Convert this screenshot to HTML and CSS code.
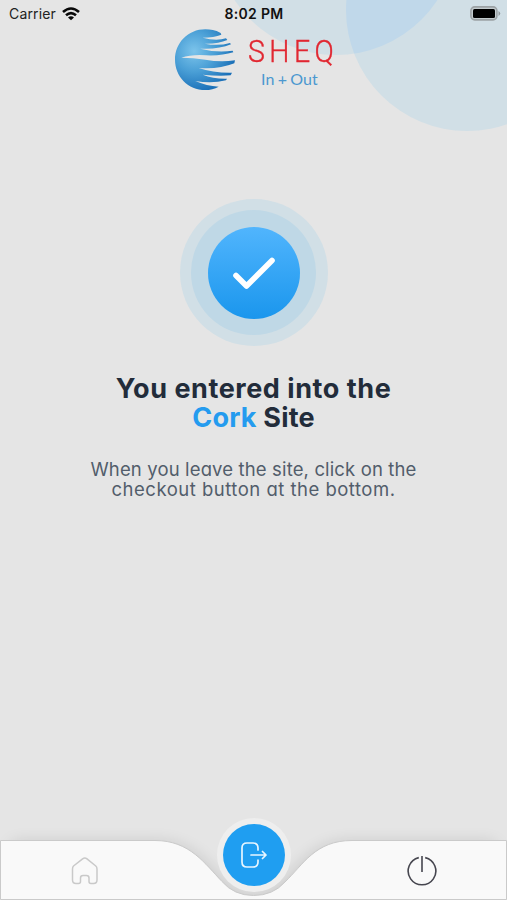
FILE: index.html
```
<!DOCTYPE html>
<html lang="en">
<head>
<meta charset="utf-8">
<meta name="viewport" content="width=device-width, initial-scale=1">
<title>SHEQ In + Out</title>
<link rel="stylesheet" href="styles.css">
</head>
<body>
<div class="screen">
  <svg class="backdrop" viewBox="0 0 507 140" aria-hidden="true">
    <circle cx="336" cy="-66" r="121" fill="#d1dfe6"/>
    <circle cx="467" cy="10" r="121" fill="#d1dfe6"/>
    <clipPath id="overlap"><circle cx="336" cy="-66" r="121"/></clipPath>
    <circle cx="467" cy="10" r="121" fill="#c0d8ea" clip-path="url(#overlap)"/>
  </svg>
  <header class="status">
    <div class="carrier"><span>Carrier</span>
      <svg width="18" height="14" viewBox="0 0 18 14" fill="none" stroke="#080808" stroke-width="2.6"><path d="M1 5Q9-2 17 5M4 8.3Q9 4 14 8.3"/><path d="M9 13.3L6 10.5Q9 8 12 10.5Z" fill="#080808" stroke="none"/></svg>
    </div>
    <time>8:02 PM</time>
    <svg class="battery" width="31" height="15" viewBox="0 0 31 15"><rect x=".9" y=".9" width="26" height="13" rx="3.8" fill="#c3cbce" stroke="#9ca2a5" stroke-width="1.6"/><rect x="3" y="3" width="22" height="9" rx="1.5" fill="#000"/><path d="M28.5 5Q32 7.5 28.5 10Z" fill="#92989b"/></svg>
  </header>
  <div class="brand">
    <svg width="62" height="62" viewBox="12 12 186 186" aria-hidden="true">
      <defs><radialGradient id="globe" cx="32%" cy="36%" r="68%"><stop offset="0" stop-color="#7cc4eb"/><stop offset=".5" stop-color="#4a9fd6"/><stop offset="1" stop-color="#1b70b8"/></radialGradient></defs>
      <path fill="url(#globe)" d="M152 24C135 15 122 13 106 13C54 13 15 54 15 104C15 154 54 195 106 195C120 195 134 192 146 185Q110 183 76 168Q125 177 168 166L171 161Q130 162 98 149Q145 154 182 151L186 143Q130 144 86 129Q145 134 193 115L195 106Q150 112 106 104Q70 98 34 98Q65 88 108 91Q155 93 190 82L188 77Q140 84 90 71Q145 74 183 58L180 54Q145 64 104 56Q145 57 172 45L168 40Q138 49 98 38Q132 38 154 29Z"/>
    </svg>
    <div class="wordmark"><span class="name">SHEQ</span><span class="sub">In + Out</span></div>
  </div>
  <main class="content">
    <div class="halo"><div class="ring"><div class="disc">
      <svg width="92" height="92" viewBox="0 0 92 92" fill="none" stroke="#fff" stroke-width="5.6" stroke-linecap="round" stroke-linejoin="round"><path d="M28 48.500L38.500 59L64 33.500"/></svg>
    </div></div></div>
    <h1><span class="h-one">You entered into the</span><span class="h-two"><b>Cork</b> Site</span></h1>
    <p><span class="p-one">When you leave the site, click on the</span><span class="p-two">checkout button at the bottom.</span></p>
  </main>
  <nav class="tabs">
    <svg class="tab-shape" width="507" height="100" viewBox="0 0 507 100" aria-hidden="true">
      <defs><filter id="soft" x="-10%" y="-50%" width="120%" height="200%"><feGaussianBlur stdDeviation="9"/></filter></defs>
      <path d="M12 44H155C190 44 205 66 222 83Q234 97 253.500 97Q273 97 285 84C303 67 315 44 352 44H495V110H12Z" fill="#000" opacity=".16" filter="url(#soft)"/>
      <path d="M.5 40.500H155C190 40.500 205 64 222 81.500Q234 95.500 253.500 95.500Q273 95.500 285 82C303 65 315 40.500 352 40.500H506.500V99.500H.5Z" fill="#f9f9f9" stroke="#cacaca"/>
    </svg>
    <div class="tab-row">
      <a class="tab home" aria-label="Home"><svg width="28" height="30" viewBox="0 0 28 30" fill="none" stroke="#c9c9c9" stroke-width="1.500" stroke-linejoin="round"><path d="M2.500 10Q1.500 11 1.500 13V24Q1.500 27.500 5 27.500H7.500Q9.500 27.500 9.500 25.500V22Q9.500 19.500 12 19.500H15.500Q18 19.500 18 22V25.500Q18 27.500 20 27.500H22.500Q26 27.500 26 24V13Q26 11 24.800 10L16 2.800Q13.800 1 11.600 2.800Z"/></svg></a>
      <a class="checkout" aria-label="Check out"><svg width="62" height="62" viewBox="0 0 62 62" fill="none" stroke="#e8f6ff" stroke-width="1.700" stroke-linecap="round" stroke-linejoin="round"><path d="M35 26V24Q35 19 30 19H24Q19 19 19 24V38Q19 43 24 43H30Q35 43 35 38V36M28 31H43M39.500 27.500L43 31L39.500 34.500"/></svg></a>
      <a class="tab power" aria-label="Log out"><svg width="32" height="32" viewBox="0 0 32 32" fill="none" stroke="#46464f" stroke-width="1.600"><path d="M12.800 2.600A13.800 13.800 0 1 0 19.200 2.600M16 1V17"/></svg></a>
    </div>
  </nav>
</div>
</body>
</html>
```
FILE: styles.css
```
* { box-sizing: border-box; }
body { margin: 0; background: #e5e5e5; font-family: Inter, "Liberation Sans", sans-serif; }
.screen { position: relative; width: 507px; height: 900px; overflow: hidden; display: flex; flex-direction: column; background: #e5e5e5; }
svg { display: block; }
.backdrop { position: absolute; top: 0; left: 0; width: 507px; height: 140px; }
.status { position: relative; height: 27px; display: grid; grid-template-columns: 1fr auto 1fr; align-items: center; padding: 0 6px 0 9px; font-size: 14px; color: #222; }
.carrier { display: flex; align-items: center; gap: 6px; letter-spacing: .15px; }
.status time { font-weight: 600; letter-spacing: .3px; color: #111; margin-right: 2px; }
.battery { justify-self: end; }
.brand { position: relative; height: 65px; padding: 2px 0 0 174px; display: flex; gap: 12px; }
.wordmark { display: flex; flex-direction: column; align-items: flex-start; padding-top: 5px; }
.name { font: 300 32px/35px Roboto, sans-serif; letter-spacing: 5px; color: #e12731; white-space: nowrap; transform: scaleX(.89); transform-origin: left; -webkit-text-stroke: .4px #e12731; }
.sub { font: 400 16px/19px Lato, sans-serif; letter-spacing: .1px; word-spacing: -1px; color: #4b98d0; padding-left: 13px; white-space: nowrap; }
.content { display: flex; flex-direction: column; align-items: center; padding-top: 107px; }
.halo { width: 148px; height: 147px; display: grid; place-items: center; border-radius: 50%; background: #d1dfe6; }
.ring { width: 125px; height: 125px; display: grid; place-items: center; border-radius: 50%; background: #bfd8e6; }
.disc { width: 92px; height: 92px; border-radius: 50%; background: linear-gradient(#51b5fd, #1a96ed); }
h1, p { margin: 0; display: flex; flex-direction: column; align-items: center; white-space: nowrap; font-feature-settings: "cv11"; }
h1 { margin-top: 28px; font-size: 27px; line-height: 29px; font-weight: 700; color: #222c3a; }
h1 b { font-weight: 700; color: #249bef; }
.h-one { letter-spacing: .55px; }
.h-two { letter-spacing: .2px; }
p { margin-top: 27px; font-size: 18.5px; line-height: 20px; color: #525d6b; }
.p-one { letter-spacing: .14px; }
.p-two { letter-spacing: .5px; }
.tabs { position: absolute; left: 0; bottom: 0; width: 507px; height: 100px; }
.tab-shape { position: absolute; inset: 0; overflow: visible; }
.tab-row { position: relative; height: 100px; display: grid; grid-template-columns: 170px 1fr 170px; align-items: center; justify-items: center; }
.tab { padding-top: 41px; }
.checkout { width: 74px; height: 74px; padding: 6px; border-radius: 50%; background: #eee; margin-top: 9px; }
.checkout svg { border-radius: 50%; background: #1f9ef1; }
```
